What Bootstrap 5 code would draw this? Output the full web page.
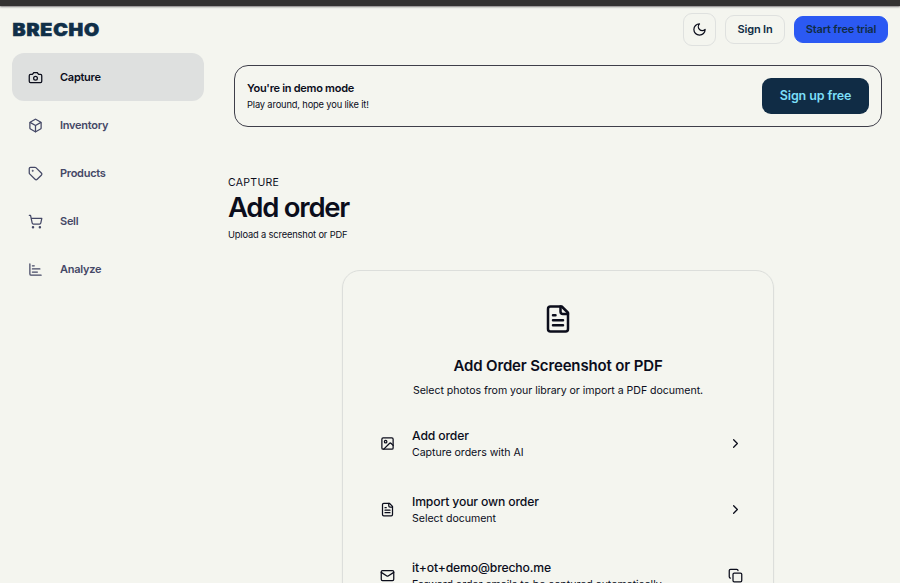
<!DOCTYPE html>
<html lang="en">
<head>
<meta charset="utf-8">
<meta name="viewport" content="width=device-width, initial-scale=1">
<title>Brecho – Add order</title>
<link href="https://cdn.jsdelivr.net/npm/bootstrap@5.3.0/dist/css/bootstrap.min.css" rel="stylesheet">
<style>
  html, body { height: 100%; }
  body { background: #f4f5ef; color: #0b0d1b; font-family: Inter, "Liberation Sans", sans-serif; font-size: 11px; line-height: 15px; }
  svg { fill: none; stroke: currentColor; stroke-width: 2; stroke-linecap: round; stroke-linejoin: round; flex: none; display: block; }
  .ic { width: 15px; height: 15px; }
  .window-edge { height: 6px; background: #333231; box-shadow: 0 1px 2px rgba(50,45,50,.6); }
  .topbar { height: 47px; padding: 0 12px 1px; }
  .logo { margin-top: 1px; padding-left: .5px; color: #102f48; font-weight: 900; font-size: 17.3px; line-height: 20px; text-decoration: none; transform-origin: left; transform: scaleX(1.13); letter-spacing: .75px; -webkit-text-stroke: .6px #102f48; }
  .tool { border: 1px solid #dfe1df; border-radius: 9px; color: #102c45; font-weight: 600; padding: 0; font-size: 11px; line-height: 15px; letter-spacing: -.18px; }
  .tool:hover { border-color: #c8ccca; }
  .tools { gap: 9px; }
  .tool-theme { width: 33px; height: 33px; color: #0b0d1b; }
  .tool-sign { width: 60px; height: 29px; }
  .tool-trial { width: 94px; height: 27px; background: #2b59f3; border-color: #2b59f3; }
  .side { width: 204px; padding-left: 12px; }
  .side .nav-link { height: 48px; padding: 0 16px; gap: 17px; color: #444866; font-weight: 600; border-radius: 12px; letter-spacing: -.27px; }
  .side .nav-link.active { background: #dee0df; color: #0b0d1b; }
  .main { padding: 12px 18px 0 24px; }
  .demo { margin-left: 6px; height: 62px; border: 1px solid #3e3e49; border-radius: 14px; padding: 0 12px; }
  .demo-title { font-weight: 600; font-size: 11px; line-height: 17px; letter-spacing: -.28px; }
  .note { font-size: 9.3px; line-height: 15px; letter-spacing: -.15px; }
  .demo .btn { width: 107px; height: 36px; border-radius: 9px; padding: 0; background: #102c45; color: #7cdff8; font-size: 12.5px; font-weight: 600; letter-spacing: -.12px; }
  .eyebrow { margin-top: 48px; font-size: 10.5px; line-height: 15px; letter-spacing: .3px; }
  h1 { font-size: 27.5px; line-height: 35px; font-weight: 600; letter-spacing: -1.25px; }
  .lead-note { margin-top: 2px; }
  .upload { width: 432px; margin: 28px 0 0 114px; border: 1px solid #dcdedb; border-radius: 18px; height: 400px; padding: 33px 30px 0; box-shadow: 0 1px 2px rgba(0,0,0,.06); }
  .upload h2 { font-size: 15px; line-height: 22px; font-weight: 600; margin-top: 21px; letter-spacing: -.15px; }
  .upload-hint { margin: 6px 0 11px; }
  .choice { height: 66px; padding: 0 0 0 7px; gap: 17px; }
  .choice-title { font-weight: 500; font-size: 12.2px; line-height: 17px; letter-spacing: -.15px; }
  .choice-sub { font-size: 10.6px; line-height: 16px; letter-spacing: -.04px; }
  .choice .choice-sub { padding-top: 1px; margin-bottom: -1px; }
</style>
</head>
<body class="overflow-hidden">
<div class="window-edge"></div>
<header class="topbar d-flex align-items-center justify-content-between">
  <a class="logo" href="#">BRECHO</a>
  <div class="tools d-flex align-items-center">
    <button class="btn tool tool-theme d-flex align-items-center justify-content-center" aria-label="Theme"><svg class="ic" viewBox="0 0 24 24"><path d="M12 3a6 6 0 0 0 9 9 9 9 0 1 1-9-9Z"/></svg></button>
    <button class="btn tool tool-sign">Sign In</button>
    <button class="btn tool tool-trial">Start free trial</button>
  </div>
</header>
<div class="d-flex">
  <nav class="side nav flex-column flex-shrink-0">
    <a class="nav-link active d-flex align-items-center" href="#"><svg class="ic" viewBox="0 0 24 24"><path d="M14.5 4h-5L7 7H4a2 2 0 0 0-2 2v9a2 2 0 0 0 2 2h16a2 2 0 0 0 2-2V9a2 2 0 0 0-2-2h-3z"/><circle cx="12" cy="13" r="3"/></svg><span>Capture</span></a>
    <a class="nav-link d-flex align-items-center" href="#"><svg class="ic" viewBox="0 0 24 24"><path d="M21 8a2 2 0 0 0-1-1.73l-7-4a2 2 0 0 0-2 0l-7 4A2 2 0 0 0 3 8v8a2 2 0 0 0 1 1.73l7 4a2 2 0 0 0 2 0l7-4A2 2 0 0 0 21 16Z"/><path d="m3.3 7 8.7 5 8.7-5M12 22V12"/></svg><span>Inventory</span></a>
    <a class="nav-link d-flex align-items-center" href="#"><svg class="ic" viewBox="0 0 24 24"><path d="M12.586 2.586A2 2 0 0 0 11.172 2H4a2 2 0 0 0-2 2v7.172a2 2 0 0 0 .586 1.414l8.704 8.704a2.426 2.426 0 0 0 3.42 0l6.58-6.58a2.426 2.426 0 0 0 0-3.42z"/><circle cx="7.5" cy="7.5" r=".5" fill="currentColor"/></svg><span>Products</span></a>
    <a class="nav-link d-flex align-items-center" href="#"><svg class="ic" viewBox="0 0 24 24"><circle cx="8" cy="21" r="1"/><circle cx="19" cy="21" r="1"/><path d="M2.05 2.05h2l2.66 12.42a2 2 0 0 0 2 1.58h9.78a2 2 0 0 0 1.95-1.57l1.65-7.43H5.12"/></svg><span>Sell</span></a>
    <a class="nav-link d-flex align-items-center" href="#"><svg class="ic" viewBox="0 0 24 24"><path d="M3 3v16a2 2 0 0 0 2 2h16M7 16h8M7 11h12M7 6h3"/></svg><span>Analyze</span></a>
  </nav>
  <main class="main flex-grow-1">
    <section class="demo d-flex align-items-center justify-content-between">
      <div>
        <div class="demo-title">You're in demo mode</div>
        <div class="note">Play around, hope you like it!</div>
      </div>
      <button class="btn">Sign up free</button>
    </section>
    <div class="eyebrow">CAPTURE</div>
    <h1 class="mb-0">Add order</h1>
    <div class="note lead-note">Upload a screenshot or PDF</div>
    <section class="upload">
      <svg class="mx-auto" width="30" height="30" viewBox="0 0 24 24"><path d="M15 2H6a2 2 0 0 0-2 2v16a2 2 0 0 0 2 2h12a2 2 0 0 0 2-2V7Z"/><path d="M14 2v4a2 2 0 0 0 2 2h4M10 9H8M16 13H8M16 17H8"/></svg>
      <h2 class="text-center mb-0">Add Order Screenshot or PDF</h2>
      <p class="choice-sub upload-hint text-center">Select photos from your library or import a PDF document.</p>
      <div class="choice d-flex align-items-center">
        <svg class="ic" viewBox="0 0 24 24"><rect x="3" y="3" width="18" height="18" rx="2"/><circle cx="9" cy="9" r="2"/><path d="m21 15-3.086-3.086a2 2 0 0 0-2.828 0L6 21"/></svg>
        <div class="flex-grow-1"><div class="choice-title">Add order</div><div class="choice-sub">Capture orders with AI</div></div>
        <svg class="ic" viewBox="0 0 24 24"><path d="m9 18 6-6-6-6"/></svg>
      </div>
      <div class="choice d-flex align-items-center">
        <svg class="ic" viewBox="0 0 24 24"><path d="M15 2H6a2 2 0 0 0-2 2v16a2 2 0 0 0 2 2h12a2 2 0 0 0 2-2V7Z"/><path d="M14 2v4a2 2 0 0 0 2 2h4M10 9H8M16 13H8M16 17H8"/></svg>
        <div class="flex-grow-1"><div class="choice-title">Import your own order</div><div class="choice-sub">Select document</div></div>
        <svg class="ic" viewBox="0 0 24 24"><path d="m9 18 6-6-6-6"/></svg>
      </div>
      <div class="choice d-flex align-items-center">
        <svg class="ic" viewBox="0 0 24 24"><rect x="2" y="4" width="20" height="16" rx="2"/><path d="m22 7-8.97 5.7a1.94 1.94 0 0 1-2.06 0L2 7"/></svg>
        <div class="flex-grow-1"><div class="choice-title">it+ot+demo@brecho.me</div><div class="choice-sub">Forward order emails to be captured automatically</div></div>
        <svg class="ic" viewBox="0 0 24 24"><rect x="8" y="8" width="14" height="14" rx="2"/><path d="M4 16c-1.1 0-2-.9-2-2V4c0-1.1.9-2 2-2h10c1.1 0 2 .9 2 2"/></svg>
      </div>
    </section>
  </main>
</div>
<script src="https://cdn.jsdelivr.net/npm/bootstrap@5.3.0/dist/js/bootstrap.bundle.min.js"></script>
</body>
</html>
